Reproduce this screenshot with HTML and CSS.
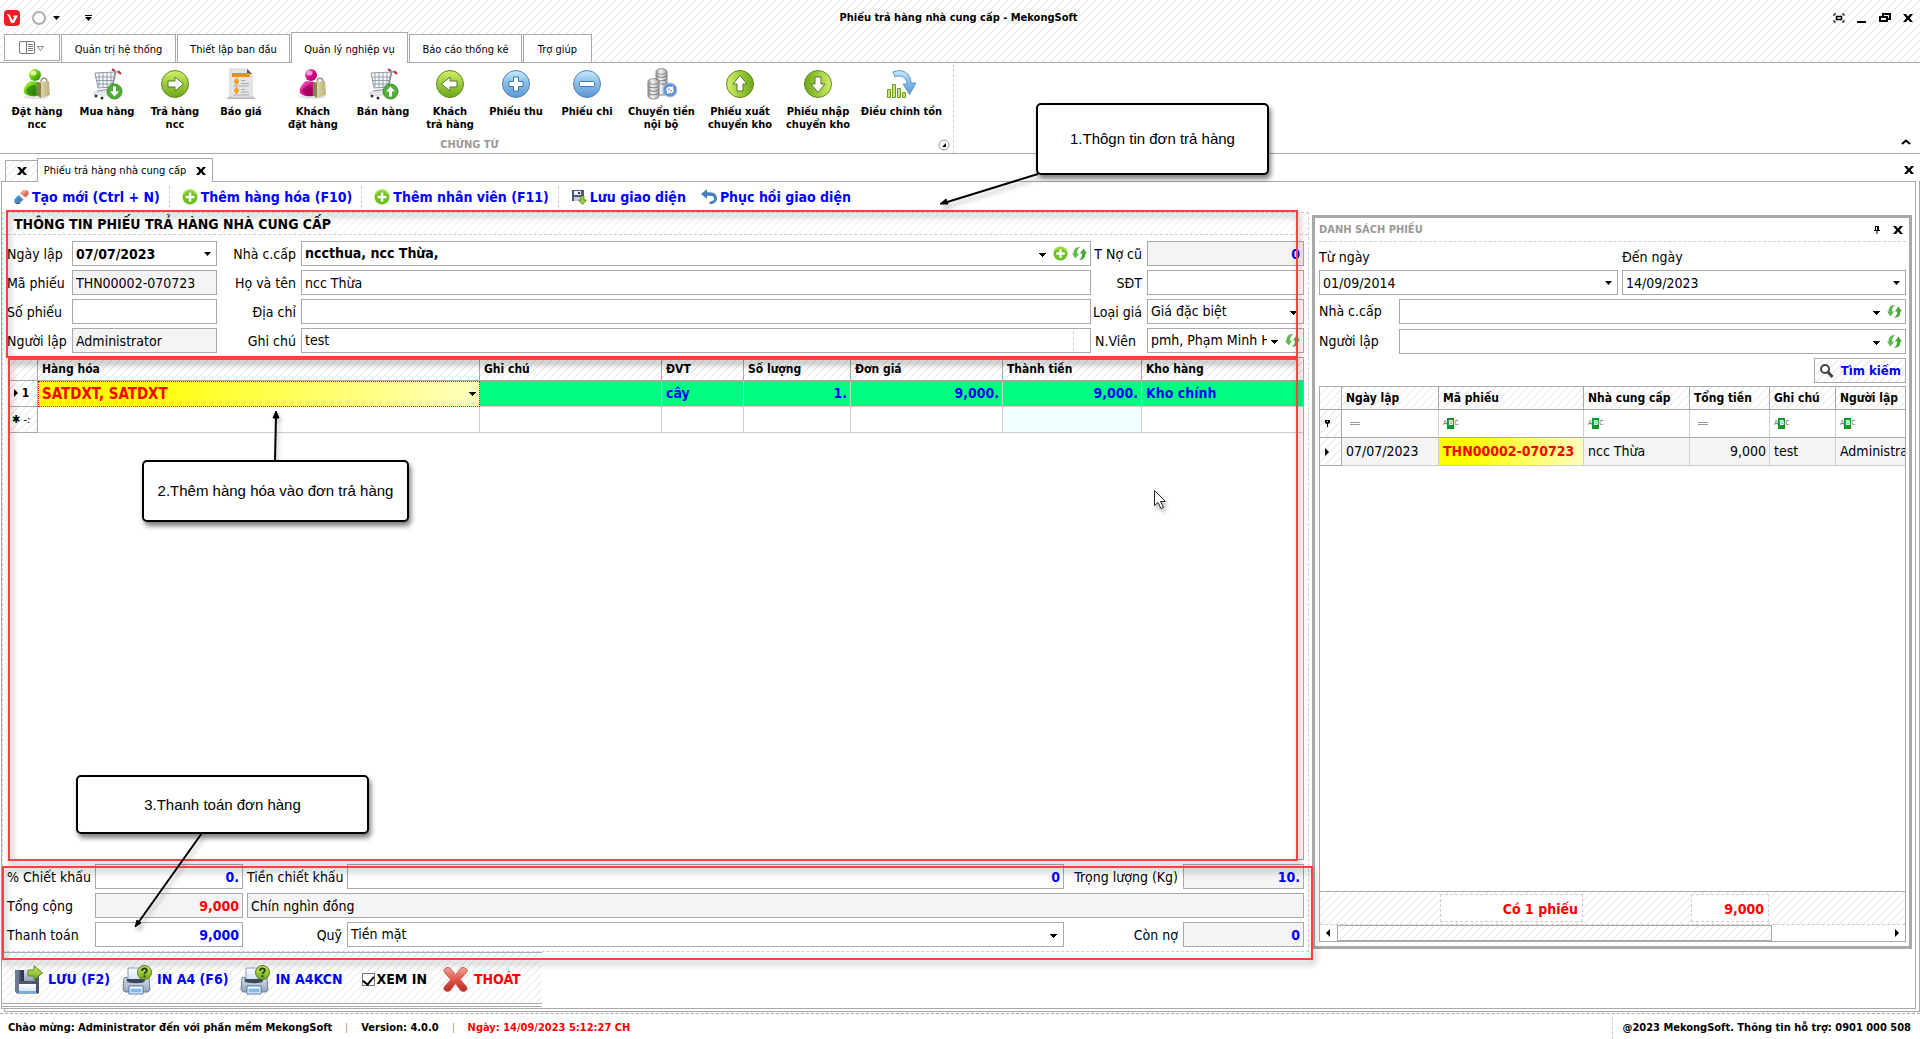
FILE: index.html
```html
<!DOCTYPE html>
<html lang="vi">
<head>
<meta charset="utf-8">
<meta name="viewport" content="width=device-width, initial-scale=1">
<title>Phiếu trả hàng nhà cung cấp - MekongSoft</title>
<link rel="stylesheet" href="styles.css">
</head>
<body>
<svg class="defs" aria-hidden="true">
  <defs>
    <linearGradient id="g-green" x1="0" y1="0" x2="0" y2="1"><stop offset="0" stop-color="#d3ef6a"/><stop offset=".5" stop-color="#9ccb3c"/><stop offset="1" stop-color="#6fa51c"/></linearGradient>
    <linearGradient id="g-blue" x1="0" y1="0" x2="0" y2="1"><stop offset="0" stop-color="#c5eafa"/><stop offset=".5" stop-color="#86bce6"/><stop offset="1" stop-color="#5b97d0"/></linearGradient>
    <linearGradient id="g-lime" x1="0" y1="0" x2="1" y2="1"><stop offset="0" stop-color="#c8ff4a"/><stop offset=".5" stop-color="#5fc814"/><stop offset="1" stop-color="#2c8208"/></linearGradient>
    <linearGradient id="g-pink" x1="0" y1="0" x2="1" y2="1"><stop offset="0" stop-color="#ff7acb"/><stop offset=".5" stop-color="#dd0a8c"/><stop offset="1" stop-color="#900050"/></linearGradient>
    <linearGradient id="g-bag" x1="0" y1="0" x2="1" y2="0"><stop offset="0" stop-color="#8e8453"/><stop offset=".3" stop-color="#ddd4a4"/><stop offset="1" stop-color="#bdb27c"/></linearGradient>
    <linearGradient id="g-red" x1="0" y1="0" x2="0" y2="1"><stop offset="0" stop-color="#f6a49b"/><stop offset=".5" stop-color="#e0564c"/><stop offset="1" stop-color="#b92b22"/></linearGradient>
    <linearGradient id="g-grey" x1="0" y1="0" x2="1" y2="0"><stop offset="0" stop-color="#9a9a9a"/><stop offset=".4" stop-color="#f6f6f6"/><stop offset="1" stop-color="#a0a0a0"/></linearGradient>
    <linearGradient id="g-steel" x1="0" y1="0" x2="0" y2="1"><stop offset="0" stop-color="#dfe6ef"/><stop offset="1" stop-color="#8fa0b8"/></linearGradient>
    <linearGradient id="g-paper" x1="0" y1="0" x2="0" y2="1"><stop offset="0" stop-color="#ffffff"/><stop offset="1" stop-color="#c9dcf0"/></linearGradient>
  </defs>
  <symbol id="bag" viewBox="0 0 32 32">
    <path d="M20 14c0-5 6-5 6 0" fill="none" stroke="#a08a80" stroke-width="1.400"/>
    <path d="M17 14l11-1 1 14-9 3-4-3z" fill="url(#g-bag)"/><path d="M16 14l4 1v15l-4-3z" fill="#8a7f50"/>
  </symbol>
  <symbol id="supplier" viewBox="0 0 32 32">
    <ellipse cx="15" cy="29" rx="13" ry="2" fill="#e4e4e4"/>
    <path d="M9 13c-6 4-7 9-6 12 4 4 11 4 15 2V14z" fill="url(#g-lime)"/><circle cx="14" cy="7" r="6" fill="url(#g-lime)"/><ellipse cx="12.500" cy="5" rx="3" ry="2.500" fill="#f0ffb0" opacity=".8"/><path d="M5 22c1 4 5 6 10 5V17c-4 0-8 1-10 5z" fill="#1f6e05" opacity=".6"/>
    <use href="#bag"/>
  </symbol>
  <symbol id="customer" viewBox="0 0 32 32">
    <ellipse cx="15" cy="29" rx="13" ry="2" fill="#e4e4e4"/>
    <path d="M9 13c-6 4-7 9-6 12 4 4 11 4 15 2V14z" fill="url(#g-pink)"/><circle cx="14" cy="7" r="6" fill="url(#g-pink)"/><ellipse cx="12.500" cy="5" rx="3" ry="2.500" fill="#ffd0ee" opacity=".7"/><path d="M5 22c1 4 5 6 10 5V17c-4 0-8 1-10 5z" fill="#7c0045" opacity=".5"/>
    <use href="#bag"/>
  </symbol>
  <symbol id="cart" viewBox="0 0 32 32">
    <path d="M4 5l20-1-3 15-14 1z" fill="#f5f7f9" stroke="#8d98a3"/>
    <path d="M4 9h19M5 12.500h18M6 16h16M8 5v14M12 5v14M16 5v14M20 4v15" fill="none" stroke="#8d98a3" stroke-width=".9"/>
    <path d="M25 3l-4 18-15 2" fill="none" stroke="#889" stroke-width="1.200"/><path d="M3 24h14v3H3z" fill="#eef0f2" stroke="#c2c8ce" stroke-width=".8"/>
    <path d="M21 2l8 3" stroke="#aaa" stroke-width="1.500"/><path d="M21 1l3 2M27 3l3 3" stroke="#b33" stroke-width="2"/>
    <circle cx="5" cy="28" r="1.500" fill="#333"/><circle cx="11" cy="30" r="1.500" fill="#333"/>
  </symbol>
  <symbol id="buy" viewBox="0 0 32 32"><use href="#cart"/><circle cx="23.500" cy="23.500" r="7.500" fill="#52ad3a" stroke="#3c9227"/><path d="M22 18.500h3v5h3l-4.500 5-4.500-5h3z" fill="#fff"/></symbol>
  <symbol id="sell" viewBox="0 0 32 32"><use href="#cart"/><circle cx="23.500" cy="23.500" r="7.500" fill="#52ad3a" stroke="#3c9227"/><path d="M22 28.500h3v-5h3l-4.500-5-4.500 5h3z" fill="#fff"/></symbol>
  <symbol id="arrow-ball" viewBox="0 0 32 32"><circle cx="16" cy="16" r="13.500" fill="url(#g-green)" stroke="#5f8a22"/><path d="M9 13h7V9l8.500 7-8.500 7v-4H9z" fill="#fff" stroke="#54792a" stroke-linejoin="round"/></symbol>
  <symbol id="plus-ball" viewBox="0 0 32 32"><circle cx="16" cy="16" r="13.500" fill="url(#g-blue)" stroke="#5684b8"/><path d="M13.500 9h5v4.500H23v5h-4.500V23h-5v-4.500H9v-5h4.500z" fill="#fff" stroke="#4474ac" stroke-linejoin="round"/></symbol>
  <symbol id="minus-ball" viewBox="0 0 32 32"><circle cx="16" cy="16" r="13.500" fill="url(#g-blue)" stroke="#5684b8"/><rect x="8.500" y="13.500" width="15" height="5" rx="1" fill="#fff" stroke="#4474ac"/></symbol>
  <symbol id="quote" viewBox="0 0 32 32">
    <path d="M1 31h30l-4-3H5z" fill="#bbb"/><path d="M5 1h18l4 5v23H5z" fill="#e6e6e6" stroke="#d4d4d4"/><path d="M22 1l5 5h-5z" fill="#555"/><rect x="7" y="5" width="18" height="4" fill="#e88f1c"/>
    <path d="M9.500 11.500h4v4h-4zM9.500 20.500h4v4h-4z" fill="#f0a020"/><path d="M11.500 10v7M9 13.500h5M11.500 19v7M9 22.500h5" stroke="#f0a020" stroke-width="1.500"/><path d="M16 12.500h4M16 15.500h8M8 18h16M16 21.500h4M16 24h8M8 27h16" stroke="#a3acb4"/>
  </symbol>
  <symbol id="coins" viewBox="0 0 32 32">
    <g fill="url(#g-grey)" stroke="#888"><path d="M11 4v23h11V4z"/><ellipse cx="16.500" cy="3.500" rx="5.500" ry="2.800"/><path d="M3 14v14c0 4 11 4 11 0V14z"/><ellipse cx="8.500" cy="13.500" rx="5.500" ry="2.800"/></g>
    <path d="M11 7c1 3 10 3 11 0M11 10.500c1 3 10 3 11 0M14 14c1 3 7 3 8 0M3 17.500c1 3 10 3 11 0M3 21c1 3 10 3 11 0M3 24.500c1 3 10 3 11 0" fill="none" stroke="#777"/>
    <circle cx="25" cy="22" r="7" fill="#6590d2" stroke="#a9c2e8"/><path d="M21 22.500c0-3.500 3-4.500 5.500-3.500l1.500-1v4h-4l1.300-1.300c-1.500-.5-2.500.3-2.500 1.800zM29 21.500c0 3.500-3 4.500-5.500 3.500L22 26v-4h4l-1.300 1.300c1.500.5 2.500-.3 2.500-1.800z" fill="#fff"/>
  </symbol>
  <symbol id="adjust" viewBox="0 0 32 32">
    <path d="M1.500 29.500v-8h3v8zM6.500 29.500v-13h3v13zM11.500 29.500v-9h3v9zM16.500 29.500v-5h3v5z" fill="#c5e57a" stroke="#6f9a28"/>
    <path d="M7 4c9-4 18 1 18 11h5l-6.500 11.500L17 16h4c0-6-6-10-12-7z" fill="url(#g-blue)" stroke="#5f94c8"/>
  </symbol>
  <symbol id="add" viewBox="0 0 16 16"><circle cx="8" cy="8" r="7.500" fill="#6cc21f"/><path d="M2 5a7 7 0 0 1 12 0" fill="none" stroke="#a2dc48" stroke-width="2"/><path d="M6.700 3.500h2.600v3.200h3.200v2.600H9.300v3.200H6.700V9.300H3.500V6.700h3.200z" fill="#fff"/></symbol>
  <symbol id="refresh" viewBox="0 0 16 16"><path d="M8.500 1.200C3.500 1 1.500 4.500 1.700 8H0l3.700 5.300L7.600 8H5.300c-.2-2.500.7-5 3.200-6.800z" fill="#5fb84c"/><path d="M7.500 14.800c5 .2 7-3.300 6.800-6.800H16l-3.700-5.300L8.400 8h2.300c.2 2.500-.7 5-3.200 6.800z" fill="#4aa83a"/></symbol>
  <symbol id="eraser" viewBox="0 0 16 16"><path d="M1 11l4.500-5 5 4.500L7 14H3z" fill="#4a86c0"/><path d="M1 12l2 2h4v1H3l-2-2z" fill="#2b5f95"/><path d="M5.500 6l2-2 5 4.500-2 2z" fill="#e6edf4"/><path d="M7.500 4l3-3H14l1.500 2v2.500l-3 3z" fill="#dd6b55"/><path d="M8.500 3.500L11 1h3l-3 4z" fill="#f2b2a4"/></symbol>
  <symbol id="save-layout" viewBox="0 0 16 16"><path d="M1 1h12v11H1z" fill="#4a5a70"/><path d="M3 2h7v4H3z" fill="#eef"/><path d="M7 3h2v2H7z" fill="#334"/><path d="M3 8h7v4H3z" fill="#c5cede"/><path d="M10 7h3v4h2.500L11.500 15.500 7.500 11H10z" fill="#9fd33c" stroke="#4a7a18" stroke-width=".8"/></symbol>
  <symbol id="undo" viewBox="0 0 16 16"><path d="M0 5l6-5v3.200h3C13.500 3.200 16 6 16 9.500S13 15 8.500 15v-2.500c3 0 4.500-1 4.500-3S11.500 6.800 9 6.800H6V10z" fill="#4880bd"/></symbol>
  <symbol id="floppy" viewBox="0 0 30 30"><path d="M2 5h24v23.500H4l-2-2z" fill="#4a5669"/><path d="M2 5h4v23H4l-2-1.500z" fill="#6b7b94"/><path d="M8 5h14v11H8z" fill="url(#g-steel)"/><path d="M8 5h3v11H8z" fill="#2e3848"/><path d="M6 19h17v9H6z" fill="url(#g-paper)"/><path d="M6 26h17v2H6z" fill="#6fb0e0"/><path d="M15 5h6V.8L29.500 8 21 15v-4h-6z" fill="url(#g-green)" stroke="#5f8a22" stroke-linejoin="round"/></symbol>
  <symbol id="printer" viewBox="0 0 30 30"><path d="M6 3h12v14H6z" fill="url(#g-paper)" stroke="#8ba0b8"/><path d="M2 13l3-1v5h17v-5l5 1 1 12-2 2H3l-2-2z" fill="url(#g-steel)" stroke="#6e7f96"/><path d="M5 14h18v2c-3 3-15 3-18 0z" fill="#3c485b"/><path d="M7 21h14v8H7z" fill="#fff" stroke="#5277a8"/><path d="M8.500 23.500h11v4h-11z" fill="#7cbaf0"/><circle cx="22.500" cy="7.500" r="7" fill="url(#g-green)" stroke="#4f7d17"/><path d="M20 6c0-3.500 5.200-3.300 4.800-.3-.2 1.500-2.300 1.500-2.300 3.300M22.500 10.300v1.900" fill="none" stroke="#213d05" stroke-width="1.800"/></symbol>
  <symbol id="cross" viewBox="0 0 28 28"><path d="M3 3c2-2 4-2 6 0l5 6 5-6c2-2 4-2 6 0 2 1 1 3 0 4l-6 7 6 7c2 2 1 4-1 5-2 1-4 0-5-1l-5-7-5 7c-1 1-3 2-5 1-2-1-3-3-1-5l6-7-6-7c-1-1-2-3 0-4z" fill="url(#g-red)" stroke="#c9584e"/></symbol>
  <symbol id="x" viewBox="0 0 10 8"><path d="M0 0h3l2 2.500L7 0h3L6.700 4 10 8H7L5 5.500 3 8H0l3.300-4z" fill="#000"/></symbol>
  <symbol id="caret" viewBox="0 0 8 4"><path d="M0 0h7L3.500 4z" fill="#000"/></symbol>
  <symbol id="right" viewBox="0 0 4 8"><path d="M0 0l4 4-4 4z" fill="#000"/></symbol>
</svg>

<div class="app">
  <header class="titlebar hatch">
    <div class="quick">
      <svg class="ico16" viewBox="0 0 16 16"><rect width="16" height="16" rx="4" fill="#ed1c24"/><path d="M2.500 3.500l3.500 1.500 2.500 5.500L10.500 7H9l1-1.500h4L10 13H7L4.500 6.500z" fill="#fff"/></svg>
      <svg class="ring" viewBox="0 0 14 14"><circle cx="7" cy="7" r="6" fill="#fff" stroke="#b0b0b0" stroke-width="2"/></svg>
      <svg class="caret"><use href="#caret"/></svg>
      <svg class="more" viewBox="0 0 8 6"><path d="M0 0h7v1H0zM0 2h7L3.500 6z"/></svg>
    </div>
    <h1 class="title">Phiếu trả hàng nhà cung cấp - MekongSoft</h1>
    <div class="winbtns">
      <button class="bare" aria-label="Toàn màn hình"><svg width="12" height="10" viewBox="0 0 12 10"><path d="M1 3V1h2M9 1h2v2M11 7v2H9M3 9H1V7" fill="none" stroke="#000"/><rect x="3.500" y="3.500" width="5" height="3" fill="none" stroke="#000" stroke-width="1.500"/></svg></button>
      <button class="bare" aria-label="Thu nhỏ"><svg width="10" height="10"><path d="M0 8h9v2H0z"/></svg></button>
      <button class="bare" aria-label="Khôi phục"><svg width="12" height="10" viewBox="0 0 12 10"><path d="M4 3V1h7v5H9M1 4h7v4H1z" fill="none" stroke="#000" stroke-width="2"/></svg></button>
      <button class="bare" aria-label="Đóng"><svg class="x"><use href="#x"/></svg></button>
    </div>
  </header>

  <nav class="tabs hatch">
    <button class="tab app-tab" aria-label="Menu"><svg width="26" height="14" viewBox="0 0 26 14"><rect x=".5" y=".5" width="15" height="12" rx="1.500" fill="#fff" stroke="#777"/><path d="M7.500 1v11M9 3.500h5M9 5.500h5M9 7.500h5M9 9.500h5" stroke="#777"/><path d="M18.500 5.500h6l-3 4z" fill="#fff" stroke="#888"/></svg></button>
    <button class="tab t1">Quản trị hệ thống</button>
    <button class="tab t2">Thiết lập ban đầu</button>
    <button class="tab t3 active">Quản lý nghiệp vụ</button>
    <button class="tab t4">Báo cáo thống kê</button>
    <button class="tab t5">Trợ giúp</button>
  </nav>

  <section class="ribbon">
    <div class="group">
      <div class="tools">
        <button class="tool"><svg><use href="#supplier"/></svg>Đặt hàng<br>ncc</button>
        <button class="tool"><svg><use href="#buy"/></svg>Mua hàng</button>
        <button class="tool"><svg><use href="#arrow-ball"/></svg>Trả hàng<br>ncc</button>
        <button class="tool"><svg><use href="#quote"/></svg>Báo giá</button>
        <button class="tool"><svg><use href="#customer"/></svg>Khách<br>đặt hàng</button>
        <button class="tool"><svg><use href="#sell"/></svg>Bán hàng</button>
        <button class="tool"><svg class="left"><use href="#arrow-ball"/></svg>Khách<br>trả hàng</button>
        <button class="tool"><svg><use href="#plus-ball"/></svg>Phiếu thu</button>
        <button class="tool"><svg><use href="#minus-ball"/></svg>Phiếu chi</button>
        <button class="tool"><svg><use href="#coins"/></svg>Chuyển tiền<br>nội bộ</button>
        <button class="tool"><svg viewBox="0 0 32 32"><use href="#arrow-ball" width="32" height="32" transform="rotate(-90 16 16)"/></svg>Phiếu xuất<br>chuyển kho</button>
        <button class="tool"><svg viewBox="0 0 32 32"><use href="#arrow-ball" width="32" height="32" transform="rotate(90 16 16)"/></svg>Phiếu nhập<br>chuyển kho</button>
        <button class="tool"><svg><use href="#adjust"/></svg>Điều chỉnh tồn</button>
      </div>
      <div class="group-name">CHỨNG TỪ</div>
      <svg class="launcher" viewBox="0 0 12 12"><circle cx="6" cy="6" r="5" fill="#fff" stroke="#999"/><path d="M8 4v4H4z"/></svg>
    </div>
    <button class="bare collapse" aria-label="Thu gọn"><svg width="10" height="6" viewBox="0 0 10 6"><path d="M1 5l4-3.500L9 5" fill="none" stroke="#000" stroke-width="2"/></svg></button>
  </section>

  <div class="doctabs">
    <button class="doctab blank hatch" aria-label="Đóng tab"><svg class="x"><use href="#x"/></svg></button>
    <button class="doctab current">Phiếu trả hàng nhà cung cấp <svg class="x"><use href="#x"/></svg></button>
    <button class="bare doc-close" aria-label="Đóng phiếu"><svg class="x"><use href="#x"/></svg></button>
  </div>

  <div class="outer">
  <main class="frame">
    <div class="actions">
      <button class="act"><svg class="ico16"><use href="#eraser"/></svg>Tạo mới (Ctrl + N)</button>
      <button class="act sep"><svg class="ico16"><use href="#add"/></svg>Thêm hàng hóa (F10)</button>
      <button class="act sep"><svg class="ico16"><use href="#add"/></svg>Thêm nhân viên (F11)</button>
      <button class="act sep"><svg class="ico16"><use href="#save-layout"/></svg>Lưu giao diện</button>
      <button class="act"><svg class="ico16"><use href="#undo"/></svg>Phục hồi giao diện</button>
    </div>

    <div class="work">
      <div class="left-col">
      <section class="voucher">
        <div class="part info">
          <h2 class="caption hatch light">THÔNG TIN PHIẾU TRẢ HÀNG NHÀ CUNG CẤP</h2>
          <div class="fields">
            <label for="ngay">Ngày lập</label>
            <div class="box"><input class="bold" id="ngay" value="07/07/2023"><button class="drop" aria-label="Chọn ngày"><svg class="caret"><use href="#caret"/></svg></button></div>
            <label class="r" for="ncc">Nhà c.cấp</label>
            <div class="box"><select class="bold" id="ncc"><option>nccthua, ncc Thừa,</option></select><button class="in" aria-label="Thêm"><svg class="ico16"><use href="#add"/></svg></button><button class="in" aria-label="Tải lại"><svg class="ico16"><use href="#refresh"/></svg></button></div>
            <label class="r" for="no">T Nợ cũ</label>
            <div class="box grey"><input class="num" id="no" value="0" readonly></div>

            <label for="ma">Mã phiếu</label>
            <div class="box grey"><input id="ma" value="THN00002-070723" readonly></div>
            <label class="r" for="ten">Họ và tên</label>
            <div class="box"><input id="ten" value="ncc Thừa"></div>
            <label class="r" for="sdt">SĐT</label>
            <div class="box"><input id="sdt"></div>

            <label for="so">Số phiếu</label>
            <div class="box"><input id="so"></div>
            <label class="r" for="dc">Địa chỉ</label>
            <div class="box"><input id="dc"></div>
            <label class="r" for="loai">Loại giá</label>
            <div class="box"><select id="loai"><option>Giá đặc biệt</option></select></div>

            <label for="nguoi">Người lập</label>
            <div class="box grey"><input id="nguoi" value="Administrator" readonly></div>
            <label class="r" for="gc">Ghi chú</label>
            <div class="box memo"><textarea id="gc" rows="1">test</textarea></div>
            <label for="nv" class="mid">N.Viên</label>
            <div class="box"><select id="nv"><option>pmh, Phạm Minh H</option></select><button class="in" aria-label="Tải lại"><svg class="ico16"><use href="#refresh"/></svg></button></div>
          </div>
        </div>

        <div class="part lines">
          <div class="grid-box">
          <table class="items">
            <colgroup><col class="c0"><col class="c1"><col class="c2"><col class="c3"><col class="c4"><col class="c5"><col class="c6"><col class="c7"></colgroup>
            <thead><tr class="hatch"><th></th><th>Hàng hóa</th><th>Ghi chú</th><th>ĐVT</th><th>Số lượng</th><th>Đơn giá</th><th>Thành tiền</th><th>Kho hàng</th></tr></thead>
            <tbody>
              <tr class="sel"><td class="ind hatch"><svg class="right"><use href="#right"/></svg> 1</td><td class="goods"><select aria-label="Hàng hóa"><option>SATDXT, SATDXT</option></select></td><td></td><td>cây</td><td class="n">1.</td><td class="n">9,000.</td><td class="n">9,000.</td><td>Kho chính</td></tr>
              <tr><td class="ind new hatch">✱ -:</td><td></td><td></td><td></td><td></td><td></td><td class="azure"></td><td></td></tr>
            </tbody>
          </table>
          </div>
        </div>

        <div class="part pay">
          <div class="pay-fields">
            <label for="ck">% Chiết khấu</label>
            <div class="box"><input class="num" id="ck" value="0."></div>
            <label class="mid" for="tck">Tiền chiết khấu</label>
            <div class="box"><input class="num" id="tck" value="0"></div>
            <label class="r" for="kg">Trọng lượng (Kg)</label>
            <div class="box grey"><input class="num" id="kg" value="10." readonly></div>

            <label for="tong">Tổng cộng</label>
            <div class="box grey"><input class="num red" id="tong" value="9,000" readonly></div>
            <div class="box grey words"><input aria-label="Bằng chữ" value="Chín nghìn đồng" readonly></div>

            <label for="tt">Thanh toán</label>
            <div class="box"><input class="num" id="tt" value="9,000"></div>
            <label class="r" for="quy">Quỹ</label>
            <div class="box"><select id="quy"><option>Tiền mặt</option></select></div>
            <label class="r" for="con">Còn nợ</label>
            <div class="box grey"><input class="num" id="con" value="0" readonly></div>
          </div>
        </div>
      </section>

      <div class="buttons hatch">
        <button class="big"><svg><use href="#floppy"/></svg>LƯU (F2)</button>
        <button class="big"><svg><use href="#printer"/></svg>IN A4 (F6)</button>
        <button class="big"><svg><use href="#printer"/></svg>IN A4KCN</button>
        <label class="check"><input type="checkbox" checked>XEM IN</label>
        <button class="big red exit"><svg><use href="#cross"/></svg>THOÁT</button>
      </div>
      </div>

      <aside class="list">
        <div class="list-head"><h2>DANH SÁCH PHIẾU</h2>
          <button class="bare" aria-label="Ghim"><svg width="6" height="8" viewBox="0 0 6 8"><path d="M1 0h4v4h1v1H3.500v3h-1V5H0V4h1z"/><path d="M2 1h1v3H2z" fill="#fff"/></svg></button>
          <button class="bare" aria-label="Đóng"><svg class="x"><use href="#x"/></svg></button>
        </div>
        <div class="dates">
          <label for="tu">Từ ngày</label><label for="den">Đến ngày</label>
          <div class="box"><input id="tu" value="01/09/2014"><button class="drop" aria-label="Chọn ngày"><svg class="caret"><use href="#caret"/></svg></button></div>
          <div class="box"><input id="den" value="14/09/2023"><button class="drop" aria-label="Chọn ngày"><svg class="caret"><use href="#caret"/></svg></button></div>
        </div>
        <div class="filters">
          <label for="fncc">Nhà c.cấp</label>
          <div class="box"><select id="fncc"><option></option></select><button class="in" aria-label="Tải lại"><svg class="ico16"><use href="#refresh"/></svg></button></div>
          <label for="fnl">Người lập</label>
          <div class="box"><select id="fnl"><option></option></select><button class="in" aria-label="Tải lại"><svg class="ico16"><use href="#refresh"/></svg></button></div>
        </div>
        <button class="search hatch"><svg width="16" height="16" viewBox="0 0 16 16"><circle cx="6" cy="6" r="4" fill="none" stroke="#444" stroke-width="2"/><path d="M9 9l4.500 5" stroke="#444" stroke-width="3"/></svg>Tìm kiếm</button>

        <div class="found">
          <table class="vouchers">
            <colgroup><col class="v0"><col class="v1"><col class="v2"><col class="v3"><col class="v4"><col class="v5"><col class="v6"></colgroup>
            <thead><tr class="hatch"><th></th><th>Ngày lập</th><th>Mã phiếu</th><th>Nhà cung cấp</th><th>Tổng tiền</th><th>Ghi chú</th><th>Người lập</th></tr></thead>
            <tbody>
              <tr class="filter"><td class="hatch"><svg width="5" height="7" viewBox="0 0 5 7"><path d="M0 0h5v3L3 4v3H2V4L0 3z"/><path d="M2 1h1v1H2z" fill="#fff"/></svg></td><td><i class="eq"></i></td><td><span class="abc">A<b>B</b>C</span></td><td><span class="abc">A<b>B</b>C</span></td><td><i class="eq"></i></td><td><span class="abc">A<b>B</b>C</span></td><td><span class="abc">A<b>B</b>C</span></td></tr>
              <tr class="hit"><td class="hatch"><svg class="right"><use href="#right"/></svg></td><td>07/07/2023</td><td class="code">THN00002-070723</td><td>ncc Thừa</td><td class="n">9,000</td><td>test</td><td>Administrator</td></tr>
            </tbody>
          </table>
          <div class="totals hatch"><span class="tot count">Có 1 phiếu</span><span class="tot sum">9,000</span></div>
          <div class="hscroll"><svg class="right flip"><use href="#right"/></svg><div class="track"><div class="thumb hatch"></div></div><svg class="right"><use href="#right"/></svg></div>
        </div>
      </aside>
    </div>
  </main>
  </div>

  <footer class="status">
    <span>Chào mừng: Administrator đến với phần mềm MekongSoft</span><i></i><span>Version: 4.0.0</span><i></i><span class="red">Ngày: 14/09/2023 5:12:27 CH</span>
    <span class="copy">@2023 MekongSoft. Thông tin hỗ trợ: 0901 000 508</span>
  </footer>

  <div class="notes">
    <svg class="arrows">
      <g stroke="#000" stroke-width="2" fill="#000">
        <path d="M1038 174L944 203"/><path d="M940 204l6-5 2 5z" stroke-width="1"/>
        <path d="M275 461L276 416"/><path d="M276 411l3 7h-6z" stroke-width="1"/>
        <path d="M202 833L138 923"/><path d="M135 927l2-7 4 3z" stroke-width="1"/>
      </g>
      <path d="M1154.500 490.500v15l3.500-3 3 6 2.500-1-3-6h5z" fill="#fff" stroke="#223"/>
    </svg>
    <div class="note n1">1.Thôgn tin đơn trả hàng</div>
    <div class="note n2">2.Thêm hàng hóa vào đơn trả hàng</div>
    <div class="note n3">3.Thanh toán đơn hàng</div>
  </div>
</div>
</body>
</html>
```
FILE: styles.css
```css
:root {
  --line: #a9a9a9;
  --soft: #cfcfcf;
  --ui: "DejaVu Sans Condensed", "DejaVu Sans", "Noto Sans", sans-serif;
}
* { box-sizing: border-box; }
body { margin: 0; background: #fff; color: #000; font: 14px/17px var(--ui); }
button, input, select, textarea { font: inherit; color: inherit; margin: 0; padding: 0; border: 0; border-radius: 0; background: transparent; }
h1, h2 { margin: 0; }
svg { display: block; flex: none; }
.defs { position: absolute; width: 0; height: 0; }
.hatch { background-image: linear-gradient(135deg, transparent 46%, #e2e2e2 46%, #e2e2e2 54%, transparent 54%); background-size: 8px 8px; }
.light { background-image: linear-gradient(135deg, transparent 46%, #f0f0f0 46%, #f0f0f0 54%, transparent 54%); }
.ico16 { width: 16px; height: 16px; }
.x { width: 10px; height: 8px; }
.caret { width: 8px; height: 4px; }
.right { width: 4px; height: 8px; }
.bare { display: flex; align-items: center; }
.red { color: #f00; }

.app { position: relative; min-height: 100vh; display: flex; flex-direction: column; overflow: hidden; }

/* title bar */
.titlebar { height: 32px; display: grid; grid-template-columns: 1fr auto 1fr; align-items: center; padding: 4px 7px 0 4px; }
.quick { display: flex; align-items: center; gap: 12px; }
.ring { width: 14px; height: 14px; }
.quick .caret { margin-left: -5px; }
.more { width: 8px; height: 6px; margin-left: 12px; }
.title { font-size: 11px; line-height: 16px; font-weight: bold; }
.winbtns { display: flex; justify-content: flex-end; gap: 12px; }

/* ribbon */
.tabs { display: flex; align-items: flex-end; gap: 1px; height: 30px; padding-left: 4px; }
.tab { height: 28px; border: 1px solid var(--line); border-bottom: 0; background: #fff; font-size: 11px; text-align: center; padding-top: 2px; }
.app-tab { width: 56px; height: 27px; border-bottom: 1px solid var(--line); margin-bottom: 1px; display: grid; place-items: center; padding: 0; }
.t1 { width: 115px; } .t2 { width: 113px; } .t3 { width: 117px; } .t4 { width: 113px; } .t5 { width: 69px; }
.tab.active { height: 31px; margin-bottom: -1px; position: relative; z-index: 1; }
.ribbon { height: 92px; border: solid var(--line); border-width: 1px 0; display: flex; justify-content: space-between; }
.group { position: relative; padding: 4px 0 0 2px; border-right: 1px dashed var(--soft); margin: 1px 0 0; height: 89px; }
.tools { display: grid; grid-template-columns: 70px 70px 66px 66px 78px 62px 72px 60px 82px 66px 92px 64px 103px; height: 69px; }
.tool { align-self: start; font-size: 11px; line-height: 13px; font-weight: bold; white-space: nowrap; text-align: center; }
.tool svg { width: 32px; height: 32px; margin: 0 auto 5px; }
.tool .left { transform: scaleX(-1); }
.group-name { text-align: center; font-size: 11px; line-height: 16px; font-weight: bold; color: #999; padding-right: 16px; }
.launcher { position: absolute; right: 3px; bottom: 2px; width: 12px; height: 12px; }
.collapse { align-self: flex-end; padding: 0 9px 8px 0; }

/* document tabs */
.doctabs { display: flex; align-items: flex-end; height: 27px; padding: 0 6px 0 5px; }
.doctab { font-size: 11px; border: 1px solid var(--line); border-bottom: 0; display: flex; align-items: center; justify-content: center; }
.blank { width: 33px; height: 21px; }
.current { height: 24px; width: 176px; margin: 0 0 -1px -1px; background: #fff; gap: 10px; position: relative; z-index: 1; white-space: nowrap; }
.doc-close { margin-left: auto; padding-bottom: 7px; }

.outer { flex: 1; display: flex; position: relative; padding: 0 4px 3px 1px; }
.outer::before { content: ""; position: absolute; inset: 0 0 0 4px; border: solid var(--line); border-width: 0 1px 1px; z-index: -1; }
.frame { flex: 1; display: flex; flex-direction: column; border: 1px solid var(--line); background: #fff; min-width: 0; }
.actions { display: flex; align-items: center; height: 30px; padding-left: 11px; }
.act { display: flex; align-items: center; gap: 3px; height: 22px; padding-right: 9px; font-weight: bold; color: #00f; white-space: nowrap; }
.act.sep { border-left: 1px dashed var(--soft); padding-left: 12px; }
.act:last-child { padding-left: 6px; }

.work { flex: 1; display: grid; grid-template-columns: minmax(0, 1fr) 600px; gap: 3px; padding: 0 3px 0 0; }
.left-col { display: flex; flex-direction: column; min-width: 0; padding-bottom: 1px; }
.voucher { flex: 1; display: flex; flex-direction: column; border: 1px dashed var(--soft); min-width: 0; }
.part { position: relative; }
.part::after { content: ""; position: absolute; border: 2px solid #ff4141; pointer-events: none; filter: drop-shadow(2px 4px 3px rgba(0, 0, 0, .4)); z-index: 2; }
.info::after { inset: -3px 10px -1px 3px; }
.lines::after { inset: 1px 10px 3px 5px; }
.pay::after { inset: 2px -5px -9px -1px; }

.caption { height: 22px; padding-left: 11px; font-size: 14px; line-height: 22px; font-weight: bold; border-bottom: 1px dashed var(--soft); }
.fields, .pay-fields { display: grid; grid-auto-rows: 25px; row-gap: 4px; align-items: center; padding: 6px 4px 4px; }
.fields { grid-template-columns: 65px 145px 84px minmax(0, 1fr) 56px 157px; }
.fields label, .pay-fields label { white-space: nowrap; padding-top: 1px; }
label.r { text-align: right; padding-right: 5px; }
label.mid { padding-left: 4px; }
.box { display: flex; align-items: center; height: 25px; border: 1px solid var(--line); background: #fff; min-width: 0; padding-right: 3px; }
.box.grey { background: #f4f4f4; }
.box input, .box select, .box textarea { flex: 1; min-width: 0; width: 100%; height: 20px; padding-left: 3px; outline: 0; }
.box textarea { resize: none; line-height: 18px; overflow: hidden; border-right: 1px dashed var(--soft); }
.memo { padding-right: 16px; }
.box .bold { font-weight: bold; }
.box .num { font-weight: bold; text-align: right; color: #00f; }
.box .num.red { color: #f00; }
.drop { width: 10px; height: 20px; display: grid; place-items: center; }
.in { margin-left: 4px; }
.in svg { width: 15px; height: 15px; }
select { appearance: none; padding-right: 14px; }
.box select, .goods select {
  background:
    linear-gradient(#000, #000) right 3px top 9px / 7px 1px no-repeat,
    linear-gradient(#000, #000) right 4px top 10px / 5px 1px no-repeat,
    linear-gradient(#000, #000) right 5px top 11px / 3px 1px no-repeat,
    linear-gradient(#000, #000) right 6px top 12px / 1px 1px no-repeat;
}

/* goods grid */
.lines { flex: 1; display: flex; padding: 0 4px 4px 6px; }
.grid-box { flex: 1; min-width: 0; border: 1px solid var(--line); }
table { border-collapse: separate; border-spacing: 0; table-layout: fixed; width: 100%; }
th, td { overflow: hidden; white-space: nowrap; padding: 0 4px; text-align: left; border-right: 1px solid var(--soft); border-bottom: 1px solid var(--soft); }
th { font-size: 12px; line-height: 16px; border-color: var(--line); }
.items th { height: 23px; padding-bottom: 1px; }
.items td { height: 26px; }
th:last-child, td:last-child { border-right: 0; }
.c0 { width: 28px; } .c1 { width: 442px; } .c2 { width: 182px; } .c3 { width: 82px; } .c4 { width: 107px; } .c5 { width: 152px; } .c6 { width: 139px; } .c7 { width: auto; }
.sel td { background-color: #00ff80; color: #00f; font-weight: bold; }
.n { text-align: right; padding-right: 3px; }
.items .ind { background-color: #fff; color: #000; font-size: 12px; font-weight: bold; padding: 0 0 0 4px; border-color: var(--line); }
.ind .right { display: inline-block; }
.items .new { font-weight: normal; font-size: 11px; padding-left: 2px; }
.items .goods { background: linear-gradient(90deg, #ff0 20%, #ffffc0); color: #f00; padding: 0; border: 1px dotted #f00; }
.goods select { width: 100%; height: 22px; padding-left: 3px; font-weight: bold; font-size: 15px; }
.azure { background: #f0ffff; }

.pay-fields { grid-template-columns: 88px 148px 104px minmax(0, 1fr) 119px 121px; padding-top: 0; }
.words { grid-column: 3 / -1; margin-left: 4px; }

.buttons { width: 540px; height: 55px; border: solid var(--line); border-width: 1px 0; display: flex; align-items: center; padding: 0 11px; box-shadow: inset 0 -2px #fff, inset 0 -3px var(--line); }
.big { display: flex; align-items: center; gap: 5px; margin-right: 12px; color: #00f; font-weight: bold; white-space: nowrap; }
.big svg { width: 30px; height: 30px; }
.big.red { color: #f00; margin: 0; }
.exit svg { width: 27px; height: 27px; }
.check { display: flex; align-items: center; margin: 0 15px 0 8px; font-weight: bold; white-space: nowrap; }
.check input { appearance: none; width: 13px; height: 13px; border: 1px solid #777; margin-right: 1px; background: #fff; display: grid; place-items: center; }
.check input:checked::after { content: ""; width: 5px; height: 9px; border: solid #000; border-width: 0 2px 2px 0; transform: rotate(40deg); }

/* voucher list */
.list { margin: 3px 0 59px; border: 3px solid var(--line); padding: 0 3px 4px 4px; display: flex; flex-direction: column; min-width: 0; }
.list-head { display: flex; align-items: center; gap: 13px; height: 24px; border-bottom: 1px dashed var(--soft); padding-right: 3px; }
.list-head h2 { flex: 1; font-size: 11px; line-height: 16px; color: #999; }
.dates { display: grid; grid-template-columns: 300fr 285fr; gap: 4px; padding-top: 7px; }
.filters { display: grid; grid-template-columns: 80px 1fr; row-gap: 5px; align-items: center; padding-top: 4px; }
.search { align-self: flex-end; margin: 4px 0 3px; width: 92px; height: 25px; border: 1px solid var(--line); display: flex; align-items: center; justify-content: space-between; padding: 0 4px; color: #00f; font-weight: bold; font-size: 13px; white-space: nowrap; }
.found { flex: 1; display: flex; flex-direction: column; border: 1px solid var(--line); min-height: 0; overflow: hidden; }
.vouchers { margin-bottom: auto; }
.v0 { width: 22px; } .v1 { width: 97px; } .v2 { width: 145px; } .v3 { width: 106px; } .v4 { width: 80px; } .v5 { width: 66px; } .v6 { width: auto; }
.vouchers th { height: 23px; padding: 0 4px; }
.vouchers td { height: 28px; padding: 0 3px 0 4px; }
.vouchers td:first-child { padding: 0 0 0 5px; border-color: var(--line); background-color: #fff; }
.filter td { border-bottom-color: var(--line); }
.hit td { background-color: #f4f4f4; }
.vouchers .code { background: linear-gradient(90deg, #ff0 20%, #ffffc0); color: #f00; font-weight: bold; }
.eq { display: block; width: 10px; height: 3px; margin-left: 4px; border: solid #999; border-width: 1px 0; }
.abc { display: flex; align-items: center; font-size: 7px; line-height: 11px; color: #666; }
.abc b { background: #0a9a2a; color: #fff; width: 7px; text-align: center; }
.totals { height: 34px; border-top: 1px solid var(--line); border-bottom: 1px dashed var(--soft); display: flex; align-items: center; }
.tot { height: 28px; background: #fff; border: 1px dashed var(--soft); color: #f00; font-weight: bold; line-height: 28px; text-align: right; padding-right: 4px; }
.count { width: 143px; margin-left: 120px; }
.sum { width: 78px; margin-left: 108px; }
.hscroll { height: 16px; display: flex; align-items: center; padding: 0 6px; gap: 7px; }
.flip { transform: scaleX(-1); }
.track { flex: 1; height: 16px; }
.thumb { width: 79%; height: 16px; border: 1px solid var(--line); }

/* status bar */
.status { display: flex; align-items: center; gap: 14px; height: 26px; margin-top: 1px; border-top: 1px dashed var(--line); padding: 3px 9px 0 8px; font-size: 11px; line-height: 16px; font-weight: bold; white-space: nowrap; }
.status i { width: 1px; height: 10px; background: #e0a080; }
.copy { margin-left: auto; border-left: 1px dashed var(--soft); padding-left: 10px; line-height: 22px; }

/* annotations laid over the window */
.notes { position: absolute; inset: 0; pointer-events: none; z-index: 5; }
.arrows { width: 100%; height: 100%; filter: drop-shadow(2px 4px 2px rgba(0, 0, 0, .25)); }
.note { position: absolute; display: grid; place-items: center; border: 2px solid #000; border-radius: 5px; background: #fff; font: 15px/20px "Liberation Sans", Arial, sans-serif; box-shadow: 2px 4px 5px rgba(0, 0, 0, .5); white-space: nowrap; }
.n1 { left: 1036px; top: 103px; width: 233px; height: 72px; }
.n2 { left: 142px; top: 460px; width: 267px; height: 62px; }
.n3 { left: 76px; top: 775px; width: 293px; height: 59px; }
```
